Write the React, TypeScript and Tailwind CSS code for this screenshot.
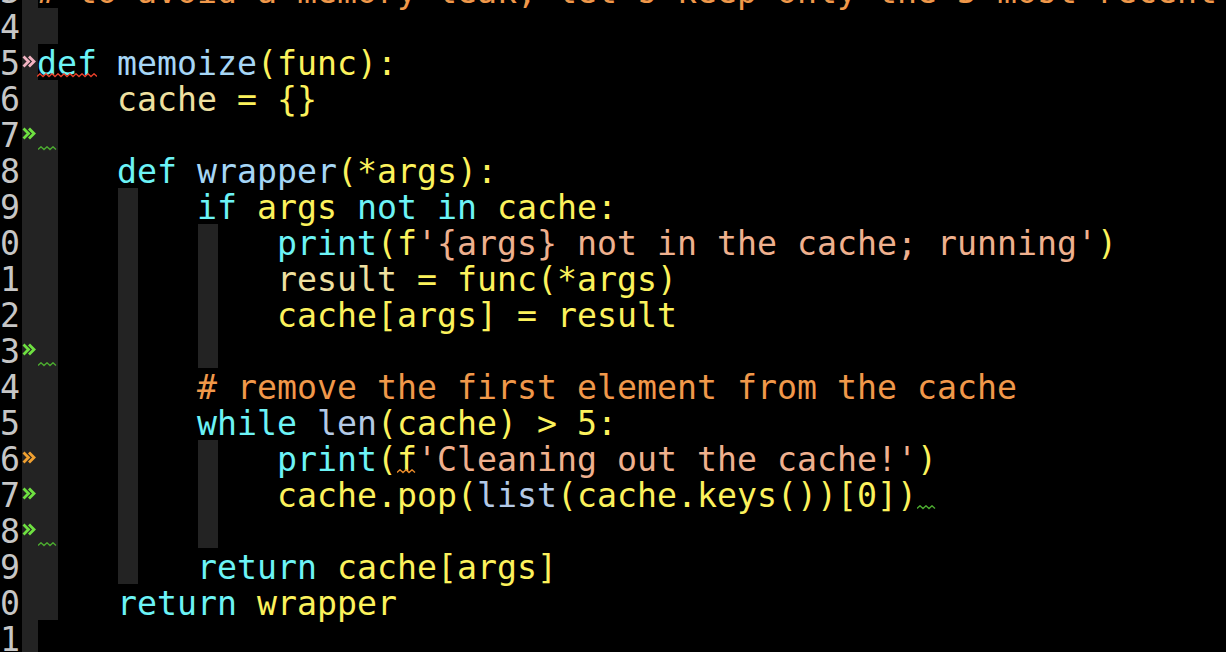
import React from "react";

type Tok = { t: string; c: string; wave?: string };
type Row = {
  n: number;
  indent: number;
  guides: number[];
  sign?: string;
  toks: Tok[];
  cellWave?: { col: number; color: string };
};

const CY = "text-[#6cf3f6]";
const LB = "text-[#a6d6f6]";
const YE = "text-[#fcf25c]";
const KH = "text-[#efe0a0]";
const SA = "text-[#efb08e]";
const OR = "text-[#f0984a]";
const ST = "text-[#b3c9e6]";

const rows: Row[] = [
  { n: 3, indent: 0, guides: [], toks: [{ t: "# to avoid a memory leak, let's keep only the 5 most recent", c: OR }] },
  { n: 4, indent: 1, guides: [0], toks: [] },
  {
    n: 5,
    indent: 0,
    guides: [],
    sign: "#f2b3c2",
    toks: [
      { t: "def", c: CY, wave: "#e8402a" },
      { t: " ", c: YE },
      { t: "memoize", c: LB },
      { t: "(func):", c: YE },
    ],
  },
  {
    n: 6,
    indent: 4,
    guides: [0],
    toks: [
      { t: "cache", c: KH },
      { t: " = {}", c: YE },
    ],
  },
  { n: 7, indent: 1, guides: [0], sign: "#6ee040", toks: [], cellWave: { col: 0, color: "#4caa30" } },
  {
    n: 8,
    indent: 4,
    guides: [0],
    toks: [
      { t: "def", c: CY },
      { t: " ", c: YE },
      { t: "wrapper", c: LB },
      { t: "(*args):", c: YE },
    ],
  },
  {
    n: 9,
    indent: 8,
    guides: [0, 4],
    toks: [
      { t: "if", c: CY },
      { t: " args ", c: YE },
      { t: "not in", c: CY },
      { t: " cache:", c: YE },
    ],
  },
  {
    n: 10,
    indent: 12,
    guides: [0, 4, 8],
    toks: [
      { t: "print", c: CY },
      { t: "(f", c: YE },
      { t: "'{args} not in the cache; running'", c: SA },
      { t: ")", c: YE },
    ],
  },
  {
    n: 11,
    indent: 12,
    guides: [0, 4, 8],
    toks: [
      { t: "result", c: KH },
      { t: " = func(*args)", c: YE },
    ],
  },
  { n: 12, indent: 12, guides: [0, 4, 8], toks: [{ t: "cache[args] = result", c: YE }] },
  { n: 13, indent: 9, guides: [0, 4, 8], sign: "#6ee040", toks: [], cellWave: { col: 0, color: "#4caa30" } },
  { n: 14, indent: 8, guides: [0, 4], toks: [{ t: "# remove the first element from the cache", c: OR }] },
  {
    n: 15,
    indent: 8,
    guides: [0, 4],
    toks: [
      { t: "while", c: CY },
      { t: " ", c: YE },
      { t: "len", c: ST },
      { t: "(cache) > 5:", c: YE },
    ],
  },
  {
    n: 16,
    indent: 12,
    guides: [0, 4, 8],
    sign: "#f0a030",
    toks: [
      { t: "print", c: CY },
      { t: "(", c: YE },
      { t: "f", c: YE, wave: "#e88a2a" },
      { t: "'Cleaning out the cache!'", c: SA },
      { t: ")", c: YE },
    ],
  },
  {
    n: 17,
    indent: 12,
    guides: [0, 4, 8],
    sign: "#6ee040",
    toks: [
      { t: "cache.pop(", c: YE },
      { t: "list", c: ST },
      { t: "(cache.keys())[0])", c: YE },
      { t: " ", c: YE, wave: "#4caa30" },
    ],
  },
  { n: 18, indent: 9, guides: [0, 4, 8], sign: "#6ee040", toks: [], cellWave: { col: 0, color: "#4caa30" } },
  {
    n: 19,
    indent: 8,
    guides: [0, 4],
    toks: [
      { t: "return", c: CY },
      { t: " cache[args]", c: YE },
    ],
  },
  {
    n: 20,
    indent: 4,
    guides: [0],
    toks: [
      { t: "return", c: CY },
      { t: " wrapper", c: YE },
    ],
  },
  { n: 21, indent: 0, guides: [], toks: [] },
];

function Wave({ color, width, top }: { color: string; width: number; top: string }) {
  const pts: string[] = [];
  const period = 6;
  for (let x = 0, i = 0; x <= width; x += period / 2, i++) {
    pts.push(`${x},${i % 2 === 0 ? 3.5 : 0.8}`);
  }
  return (
    <svg
      className={"pointer-events-none absolute left-0 " + top}
      width={width}
      height={5}
      viewBox={`0 0 ${width} 5`}
    >
      <polyline points={pts.join(" ")} fill="none" stroke={color} strokeWidth={1.4} />
    </svg>
  );
}

function Sign({ color }: { color: string }) {
  return (
    <svg className="absolute left-0 top-[11px]" width={15} height={13} viewBox="0 0 15 13">
      <polyline points="1.5,1.5 6.5,6.5 1.5,11.5" fill="none" stroke={color} strokeWidth={2.8} strokeLinejoin="miter" />
      <polyline points="7,1.5 12,6.5 7,11.5" fill="none" stroke={color} strokeWidth={2.8} strokeLinejoin="miter" />
    </svg>
  );
}

function Line({ row }: { row: Row }) {
  const cells = [];
  for (let i = 0; i < row.indent; i++) {
    const g = row.guides.includes(i);
    const w = row.cellWave && row.cellWave.col === i;
    cells.push(
      <span key={i} className={"relative w-[20px] shrink-0 " + (g ? "bg-[#232323]" : "")}>
        {w ? <Wave color={row.cellWave!.color} width={20} top="top-[30px]" /> : null}
      </span>
    );
  }
  return (
    <div className="flex h-[36px]">
      <div className="-ml-[20px] w-[40px] shrink-0 text-right leading-[40px] text-[#c6c6c6]">{row.n}</div>
      <div className="w-[2px] shrink-0" />
      <div className="relative w-[16px] shrink-0 bg-[#232323]">{row.sign ? <Sign color={row.sign} /> : null}</div>
      <div className="flex min-w-0 flex-1">
        {cells}
        <span className="-ml-[1px] whitespace-pre leading-[40px]">
          {row.toks.map((tk, i) =>
            tk.wave ? (
              <span key={i} className={"relative " + tk.c}>
                {tk.t}
                <Wave color={tk.wave} width={tk.t.length * 20} top="top-[29px]" />
              </span>
            ) : (
              <span key={i} className={tk.c}>
                {tk.t}
              </span>
            )
          )}
        </span>
      </div>
    </div>
  );
}

export default function App() {
  return (
    <div className="h-[652px] w-full overflow-hidden bg-black font-['DejaVu_Sans_Mono',monospace] text-[33.22px]">
      <div className="-mt-[28px]">
        {rows.map((r) => (
          <Line key={r.n} row={r} />
        ))}
      </div>
    </div>
  );
}
